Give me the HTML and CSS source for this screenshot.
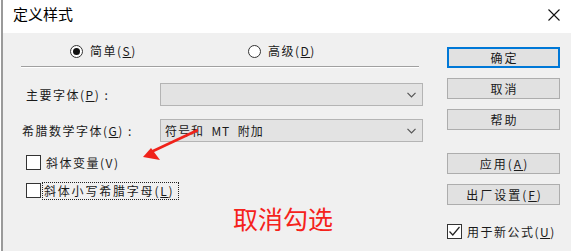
FILE: index.html
```html
<!DOCTYPE html>
<html lang="zh">
<head>
<meta charset="utf-8">
<link rel="stylesheet" href="styles.css">
</head>
<body>
<div class="window">
  <div class="titlebar">
    <span class="title">定义样式</span>
    <svg class="close" width="12" height="12" viewBox="0 0 12 12"><path d="M0.5 0.5 L11.5 11.5 M11.5 0.5 L0.5 11.5" stroke="#111" stroke-width="1.1" fill="none"/></svg>
  </div>
  <div class="content">
    <div class="left">
      <div class="radios">
        <label class="radio radio-first"><span class="circle checked"></span><span>简单(<u>S</u>)</span></label>
        <label class="radio"><span class="circle"></span><span>高级(<u>D</u>)</span></label>
      </div>
      <div class="sep"></div>
      <div class="field field-first">
        <span class="label label-a">主要字体(<u>P</u>) :</span>
        <div class="combo"><span class="combo-text"></span><svg class="chev" width="9" height="6" viewBox="0 0 9 6"><path d="M0.5 0.8 L4.5 4.8 L8.5 0.8" stroke="#555" stroke-width="1.2" fill="none"/></svg></div>
      </div>
      <div class="field field-second">
        <span class="label label-b">希腊数学字体(<u>G</u>) :</span>
        <div class="combo"><span class="combo-text">符号和  MT  附加</span><svg class="chev" width="9" height="6" viewBox="0 0 9 6"><path d="M0.5 0.8 L4.5 4.8 L8.5 0.8" stroke="#555" stroke-width="1.2" fill="none"/></svg></div>
      </div>
      <label class="check check-first"><span class="box"></span><span>斜体变量(V)</span></label>
      <label class="check check-second"><span class="box"></span><span class="focus">斜体小写希腊字母(<u>L</u>)</span></label>
    </div>
    <div class="right">
      <div class="btn btn-default">确定</div>
      <div class="btn">取消</div>
      <div class="btn">帮助</div>
      <div class="btn btn-gap">应用(<u>A</u>)</div>
      <div class="btn">出厂设置(<u>F</u>)</div>
      <label class="check check-new"><span class="box"><svg width="13" height="13" viewBox="0 0 13 13"><path d="M1.5 6.5 L4.8 10 L11.5 2" stroke="#222" stroke-width="1.2" fill="none"/></svg></span><span>用于新公式(<u>U</u>)</span></label>
    </div>
  </div>
  <svg class="arrow" width="80" height="50" viewBox="0 0 80 50">
    <path d="M65 10 L18 32" stroke="#f0221a" stroke-width="2.5" fill="none"/>
    <path d="M10 37 L18 28 L27 40 Z" fill="#f0221a"/>
  </svg>
  <div class="note">取消勾选</div>
</div>
</body>
</html>
```
FILE: styles.css
```css
* { box-sizing: border-box; }
html, body { margin: 0; padding: 0; background: #ffffff; }
body {
  font-family: "Noto Sans CJK SC", "Noto Sans", sans-serif;
  font-size: 12px;
  color: #1a1a1a;
  width: 571px;
  height: 251px;
  overflow: hidden;
}
u { text-decoration: underline; text-underline-offset: 1px; }
.window {
  position: relative;
  width: 571px;
  height: 251px;
  margin-left: 1px;
  border-left: 2px solid #9a9a9a;
  display: flex;
  flex-direction: column;
}
.titlebar {
  height: 33px;
  background: #ffffff;
  display: flex;
  align-items: flex-start;
  justify-content: space-between;
  padding: 4px 12px 0 10px;
}
.title { font-size: 15px; line-height: 20px; color: #000; }
.close { margin-top: 5px; }
.content {
  flex: 1;
  background: #f0f0f0;
  display: flex;
  letter-spacing: 1.5px;
}
.left { width: 430px; display: flex; flex-direction: column; }
.radios { display: flex; margin-top: 10px; height: 16px; padding-left: 67px; align-items: center; }
.radio { display: flex; align-items: center; gap: 7px; line-height: 16px; }
.radio-first { width: 178px; }
.circle {
  width: 13px; height: 13px; border-radius: 50%;
  border: 1px solid #333; background: #fff;
  display: flex; align-items: center; justify-content: center;
}
.circle.checked::after { content: ""; width: 7px; height: 7px; border-radius: 50%; background: #111; }
.sep {
  margin-top: 7px; margin-left: 18px; width: 398px;
  border-top: 1px solid #a0a0a0; border-bottom: 1px solid #ffffff;
}
.field { display: flex; align-items: center; height: 23px; }
.field-first { margin-top: 15px; }
.field-second { margin-top: 13px; }
.label { width: 157px; line-height: 16px; white-space: nowrap; }
.label-a { padding-left: 23px; }
.label-b { padding-left: 19px; }
.combo {
  width: 263px; height: 23px;
  background: #e3e3e3; border: 1px solid #b4b4b4;
  display: flex; align-items: center; justify-content: space-between;
  padding: 0 6px 0 4px;
}
.combo-text { line-height: 16px; white-space: pre; letter-spacing: 1px; }
.chev { margin-top: 1px; }
.check { display: flex; align-items: center; gap: 5px; line-height: 16px; padding-left: 23px; height: 17px; }
.check-first { margin-top: 12px; }
.check-second { margin-top: 11px; }
.box {
  width: 15px; height: 15px; border: 1px solid #333; background: #fff;
  display: flex; align-items: center; justify-content: center; flex: none;
}
.focus { outline: 1px dotted #222; outline-offset: 0; padding: 0 4px 0 1px; margin-left: -3px; letter-spacing: 1.8px; }
.right { width: 113px; margin-left: 14px; margin-top: 14px; display: flex; flex-direction: column; gap: 10px; }
.btn {
  height: 21px; background: #e1e1e1; border: 1px solid #adadad;
  display: flex; align-items: center; justify-content: center; line-height: 16px;
  letter-spacing: 2px; padding-left: 2px;
}
.btn-default { border: 2px solid #0078d7; }
.btn-gap { margin-top: 13px; }
.check-new { padding-left: 0; margin-top: 8px; gap: 5px; }
.arrow { position: absolute; left: 130px; top: 120px; }
.note {
  position: absolute; left: 230px; top: 201px;
  font-size: 25px; line-height: 34px; color: #f5221b; letter-spacing: 0;
}
```
